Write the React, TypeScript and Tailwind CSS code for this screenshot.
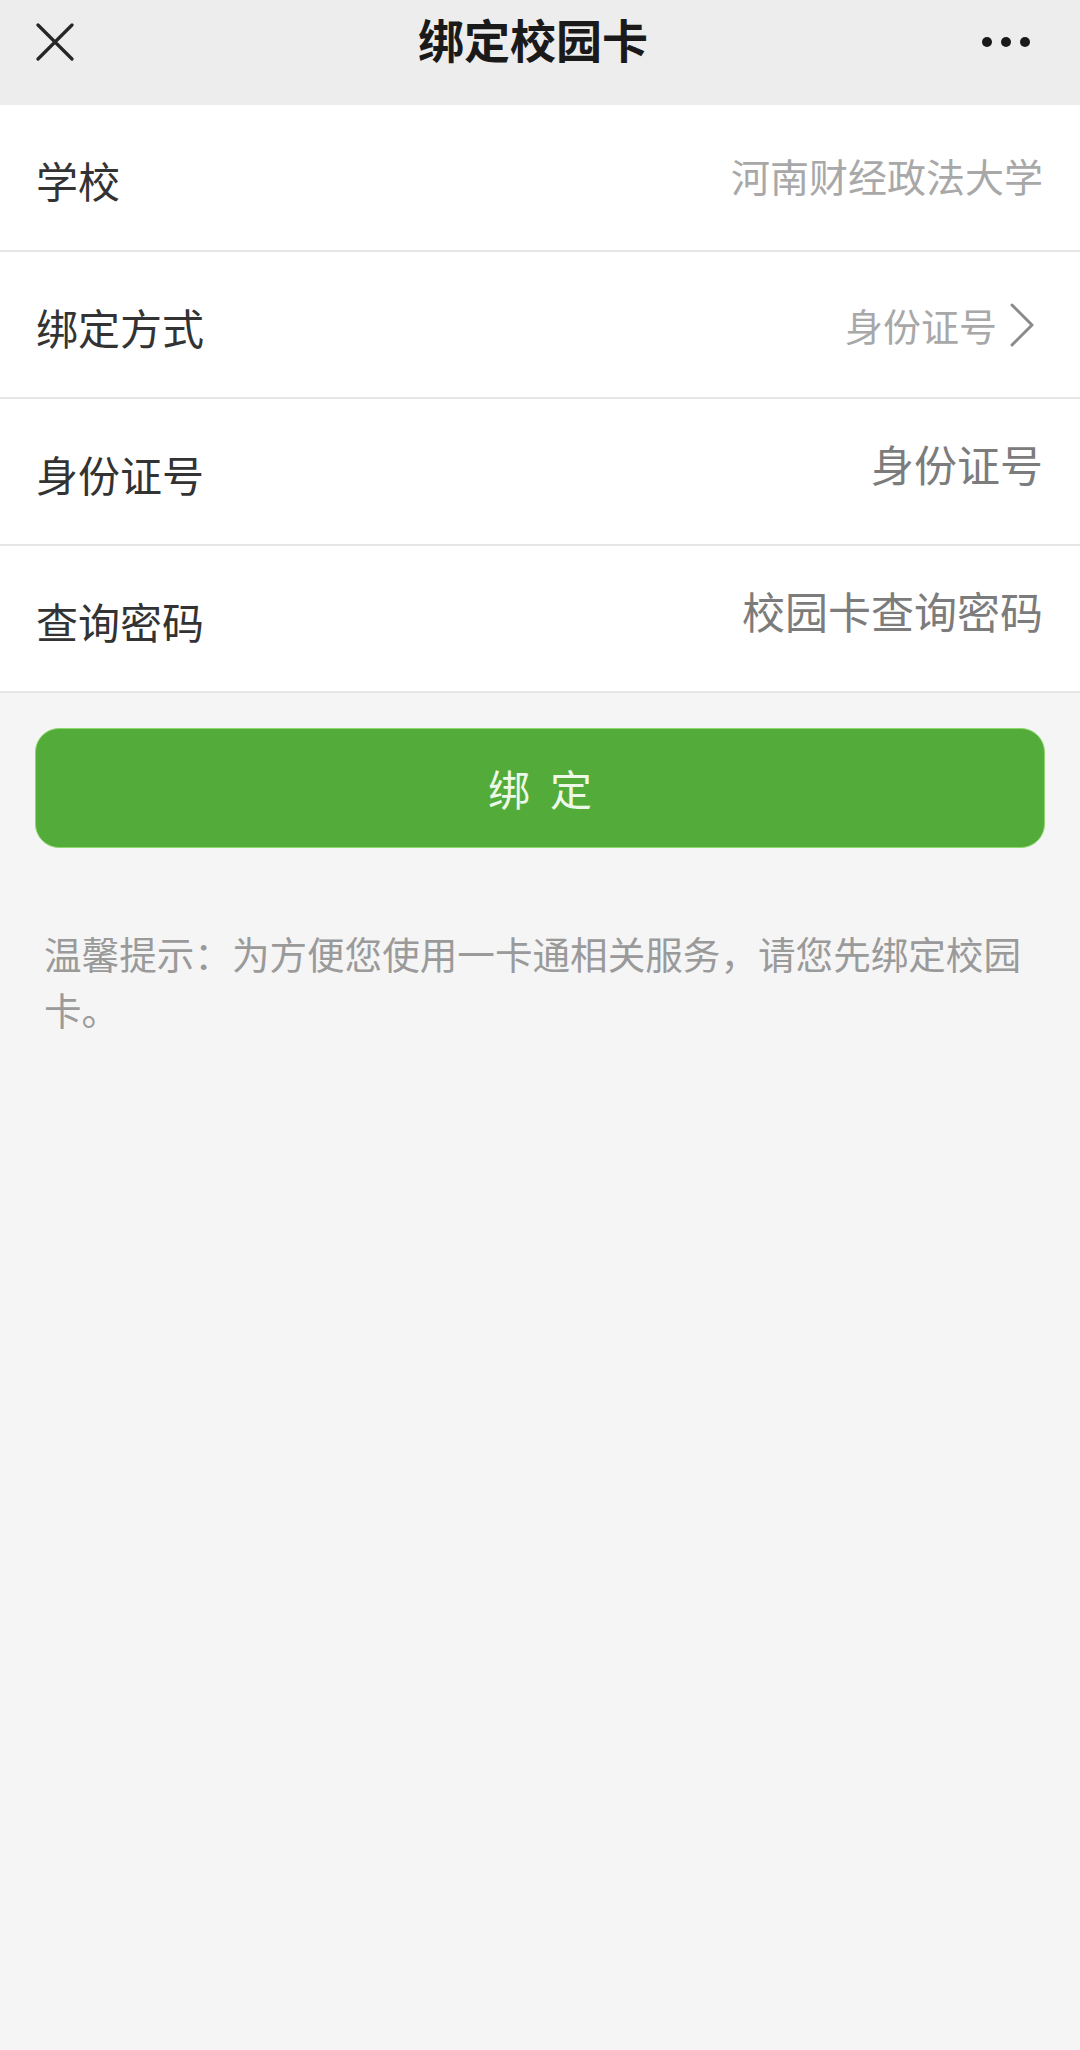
import React from "react";

const font = { fontFamily: '"Noto Sans CJK SC", "Noto Sans", sans-serif' };

type Row = {
    label: string;
    value: string;
    valueClass: string;
    arrow?: boolean;
};

const rows: Row[] = [
    { label: "学校", value: "河南财经政法大学", valueClass: "text-[39px] text-[#a8a8a8] mb-[4px]" },
    { label: "绑定方式", value: "身份证号", valueClass: "text-[38px] text-[#a8a8a8]", arrow: true },
    { label: "身份证号", value: "身份证号", valueClass: "text-[43px] text-[#7c7c7c] mb-[16px]" },
    { label: "查询密码", value: "校园卡查询密码", valueClass: "text-[43px] text-[#7c7c7c] mb-[16px]" },
];

export default function App() {
    return (
        <div className="min-h-[2050px] w-[1080px] bg-[#f5f5f5]" style={font}>
            {/* Header */}
            <div className="h-[105px] bg-[#ededed] flex items-center justify-between px-[36px]">
                <svg width="38" height="38" viewBox="0 0 38 38" className="-mt-[22px]">
                    <path d="M2 2 L36 36 M36 2 L2 36" stroke="#262626" strokeWidth="3.2" strokeLinecap="round" />
                </svg>
                <h1 className="text-[46px] font-bold text-[#1a1a1a] leading-none -mt-[30px] ml-[10px]">绑定校园卡</h1>
                <div className="flex gap-[9px] items-center -mt-[22px] mr-[14px]">
                    <span className="w-[10px] h-[10px] rounded-full bg-[#1a1a1a]" />
                    <span className="w-[10px] h-[10px] rounded-full bg-[#1a1a1a]" />
                    <span className="w-[10px] h-[10px] rounded-full bg-[#1a1a1a]" />
                </div>
            </div>

            {/* Form */}
            <div className="bg-white">
                {rows.map((r) => (
                    <div
                        key={r.label}
                        className="h-[147px] border-b-2 border-[#e6e6e6] flex items-center justify-between pl-[36px] pr-[37px]"
                    >
                        <span className="text-[42px] text-[#333333] leading-none mt-[4px]">{r.label}</span>
                        <div className={`flex items-center ${r.arrow ? "mr-[8px]" : ""}`}>
                            <span className={`leading-none ${r.valueClass}`}>{r.value}</span>
                            {r.arrow && (
                                <svg width="26" height="44" viewBox="0 0 26 44" className="ml-[12px]">
                                    <path d="M3 2 L23 22 L3 42" fill="none" stroke="#8a8a8a" strokeWidth="3" strokeLinecap="round" strokeLinejoin="round" />
                                </svg>
                            )}
                        </div>
                    </div>
                ))}
            </div>

            {/* Button */}
            <div className="px-[35px] mt-[35px]">
                <button className="w-full h-[120px] rounded-[24px] bg-[#53ac3a] border border-[#8fd870] flex items-center justify-center gap-[20px] text-[42px] text-[#eef8e8] leading-none">
                    <span>绑</span>
                    <span>定</span>
                </button>
            </div>

            {/* Tip */}
            <p className="mt-[77px] px-[44px] text-[37.6px] leading-[56px] text-[#9a9a9a]">
                温馨提示：为方便您使用一卡通相关服务，请您先绑定校园卡。
            </p>
        </div>
    );
}
